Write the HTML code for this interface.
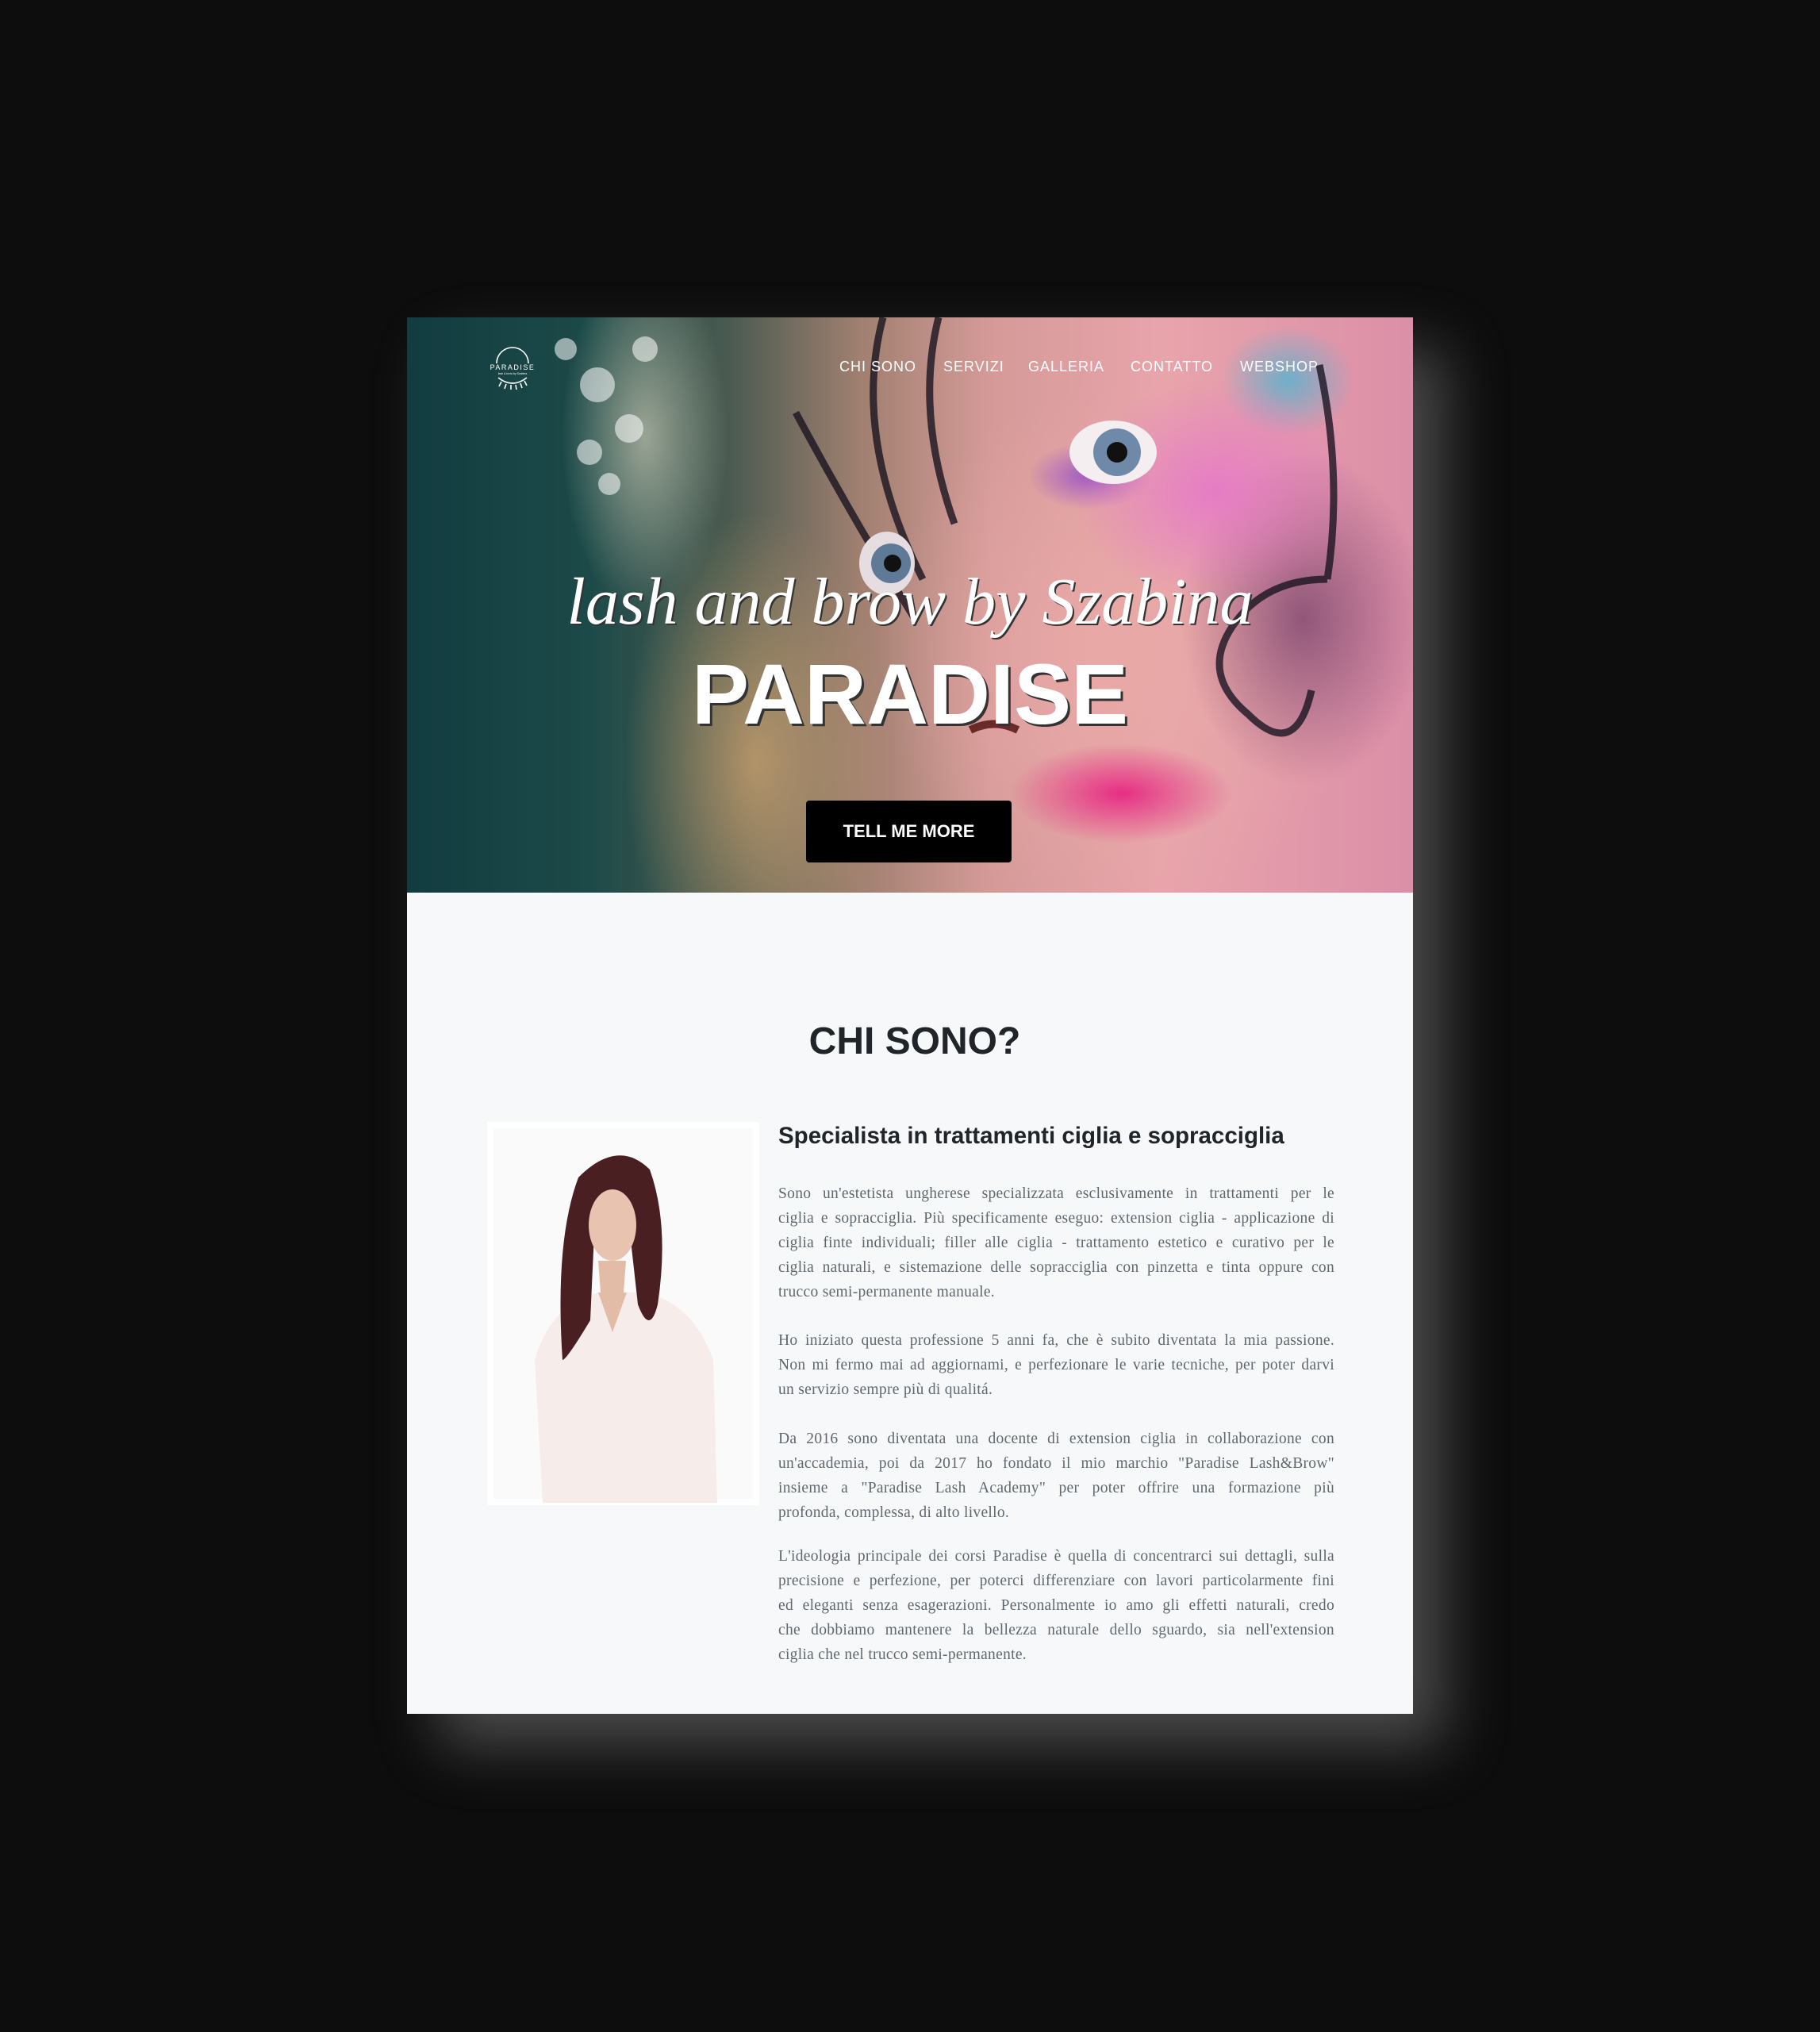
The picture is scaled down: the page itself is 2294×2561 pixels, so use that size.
<!DOCTYPE html>
<html><head><meta charset="utf-8">
<style>
*{margin:0;padding:0;box-sizing:border-box}
html,body{width:2294px;height:2561px;background:#0d0d0d;overflow:hidden;font-family:"Liberation Sans",sans-serif}
#card{position:absolute;left:513px;top:400px;width:1268px;height:1760px;background:#f7f8fa;box-shadow:40px 40px 70px rgba(190,190,190,0.35)}
#hero{position:absolute;left:0;top:0;width:1268px;height:725px;overflow:hidden;
background:
radial-gradient(ellipse 260px 200px at 1020px 220px,rgba(230,120,200,0.9),rgba(230,120,200,0) 70%),
radial-gradient(ellipse 200px 90px at 900px 600px,rgba(230,40,130,0.95),rgba(230,40,130,0) 70%),
radial-gradient(ellipse 220px 300px at 1130px 380px,rgba(90,40,90,0.6),rgba(90,40,90,0) 70%),
radial-gradient(ellipse 110px 60px at 860px 200px,rgba(150,80,200,0.9),rgba(150,80,200,0) 70%),
radial-gradient(ellipse 120px 100px at 1110px 80px,rgba(80,180,210,0.8),rgba(80,180,210,0) 70%),
radial-gradient(ellipse 380px 420px at 900px 420px,#e8a9a6,rgba(232,169,166,0) 80%),
radial-gradient(ellipse 220px 420px at 440px 560px,rgba(200,160,110,0.8),rgba(200,160,110,0) 75%),
radial-gradient(ellipse 140px 300px at 300px 150px,rgba(200,200,180,0.7),rgba(200,200,180,0) 75%),
linear-gradient(90deg,#123c40 0%,#1c4a48 18%,#4a5a50 32%,#a08070 45%,#d59a98 58%,#e8a4ab 75%,#dc8fa8 100%)}
.nav{position:absolute;top:52px;color:#fff;font-size:18px;letter-spacing:1px}
#h1{position:absolute;left:0;width:1268px;top:310px;text-align:center;color:#fff;font-family:"Liberation Serif","DejaVu Serif",serif;font-style:italic;font-size:84px;text-shadow:2px 2px 0 #333}
#h2{position:absolute;left:0;width:1268px;top:412px;text-align:center;color:#fff;font-weight:bold;font-size:108px;text-shadow:3px 3px 0 #333}
#btn{position:absolute;left:503px;top:609px;width:259px;height:78px;background:#000;border-radius:4px;color:#fff;font-weight:bold;font-size:22px;line-height:78px;text-align:center}
#chi{position:absolute;left:0;width:1280px;top:885px;text-align:center;font-weight:bold;font-size:48px;color:#212529}
#photo{position:absolute;left:101px;top:1014px;width:343px;height:483px;background:#fff}
#sub{position:absolute;left:468px;top:1015px;font-weight:bold;font-size:29.5px;color:#212529;white-space:nowrap}
.l{position:absolute;left:468px;width:701px;height:31px;line-height:31px;font-family:"Liberation Serif",serif;font-size:19.5px;letter-spacing:0.3px;color:#5f676e;text-align:justify;text-align-last:justify;white-space:nowrap;margin-top:3px}
.l.e{text-align-last:left}
</style></head><body>
<div id="card">
<div id="hero">
<svg style="position:absolute;left:0;top:0" width="1268" height="725">
<g fill="none" stroke="#1a1420" stroke-width="9" opacity="0.8">
<path d="M600 0 Q560 150 650 330"/><path d="M670 0 Q640 120 690 260"/>
<path d="M490 120 Q560 250 640 380"/>
<path d="M1160 330 Q1080 330 1040 390 Q1000 450 1060 500 Q1120 560 1140 470"/>
<path d="M1150 60 Q1180 200 1160 330"/>
</g>
<g fill="rgba(255,255,255,0.55)"><circle cx="240" cy="85" r="22"/><circle cx="230" cy="170" r="16"/><circle cx="280" cy="140" r="18"/><circle cx="300" cy="40" r="16"/><circle cx="200" cy="40" r="14"/><circle cx="255" cy="210" r="14"/></g>
<ellipse cx="890" cy="170" rx="55" ry="40" fill="#f4eef0"/><circle cx="895" cy="170" r="30" fill="#6e8aa8"/><circle cx="895" cy="170" r="13" fill="#111"/>
<ellipse cx="605" cy="310" rx="35" ry="40" fill="#e6dde0"/><circle cx="610" cy="310" r="25" fill="#5e7a96"/><circle cx="612" cy="310" r="11" fill="#111"/>
<path d="M710 520 Q740 505 770 520" stroke="#6b2a2a" stroke-width="10" fill="none"/>
<g transform="translate(133,38)" stroke="#fff" fill="none" stroke-width="1.6">
<path d="M-20 20 A20 20 0 0 1 20 20"/>
<path d="M-18 38 Q0 52 18 38"/>
<path d="M-14 43 l-3 6 M-8 46 l-2 6 M-2 47 l0 6 M4 47 l1 6 M10 45 l2 6 M15 42 l3 6"/>
<text x="0" y="28" fill="#fff" stroke="none" font-size="9" text-anchor="middle" letter-spacing="1.5" font-family="Liberation Sans">PARADISE</text>
<text x="0" y="34" fill="#fff" stroke="none" font-size="3.5" text-anchor="middle" font-family="Liberation Sans">lash &amp; brow by Szabina</text>
</g>
</svg>
<div class="nav" style="left:545px">CHI SONO</div>
<div class="nav" style="left:676px">SERVIZI</div>
<div class="nav" style="left:783px">GALLERIA</div>
<div class="nav" style="left:912px">CONTATTO</div>
<div class="nav" style="left:1050px">WEBSHOP</div>
<div id="h1">lash and brow by Szabina</div>
<div id="h2">PARADISE</div>
<div id="btn">TELL ME MORE</div>
</div>
<div id="chi">CHI SONO?</div>
<div id="photo">
<svg width="343" height="483">
<rect x="8" y="8" width="327" height="467" fill="#fafafa"/>
<path d="M70 480 L60 300 Q80 230 140 215 L200 215 Q260 230 285 300 L290 480Z" fill="#f6ecea"/>
<path d="M95 300 Q85 150 115 70 Q165 20 205 60 Q230 130 215 230 Q205 270 190 230 L180 140 L135 140 L130 250 Q100 300 95 300Z" fill="#4a1f22"/>
<ellipse cx="158" cy="130" rx="30" ry="45" fill="#e7c3b0"/>
<path d="M140 175 L175 175 L172 215 L143 215Z" fill="#e3bca8"/>
<path d="M140 215 L158 265 L176 215Z" fill="#e3bca8"/>
</svg>
</div>
<div id="sub">Specialista in trattamenti ciglia e sopracciglia</div>
<div class="l" style="top:1086px">Sono un'estetista ungherese specializzata esclusivamente in trattamenti per le</div>
<div class="l" style="top:1117px">ciglia e sopracciglia. Più specificamente eseguo: extension ciglia - applicazione di</div>
<div class="l" style="top:1148px">ciglia finte individuali; filler alle ciglia - trattamento estetico e curativo per le</div>
<div class="l" style="top:1179px">ciglia naturali, e sistemazione delle sopracciglia con pinzetta e tinta oppure con</div>
<div class="l e" style="top:1210px">trucco semi-permanente manuale.</div>
<div class="l" style="top:1271px">Ho iniziato questa professione 5 anni fa, che è subito diventata la mia passione.</div>
<div class="l" style="top:1302px">Non mi fermo mai ad aggiornami, e perfezionare le varie tecniche, per poter darvi</div>
<div class="l e" style="top:1333px">un servizio sempre più di qualitá.</div>
<div class="l" style="top:1395px">Da 2016 sono diventata una docente di extension ciglia in collaborazione con</div>
<div class="l" style="top:1426px">un'accademia, poi da 2017 ho fondato il mio marchio "Paradise Lash&amp;Brow"</div>
<div class="l" style="top:1457px">insieme a "Paradise Lash Academy" per poter offrire una formazione più</div>
<div class="l e" style="top:1488px">profonda, complessa, di alto livello.</div>
<div class="l" style="top:1543px">L'ideologia principale dei corsi Paradise è quella di concentrarci sui dettagli, sulla</div>
<div class="l" style="top:1574px">precisione e perfezione, per poterci differenziare con lavori particolarmente fini</div>
<div class="l" style="top:1605px">ed eleganti senza esagerazioni. Personalmente io amo gli effetti naturali, credo</div>
<div class="l" style="top:1636px">che dobbiamo mantenere la bellezza naturale dello sguardo, sia nell'extension</div>
<div class="l e" style="top:1667px">ciglia che nel trucco semi-permanente.</div>
</div>
</body></html>
